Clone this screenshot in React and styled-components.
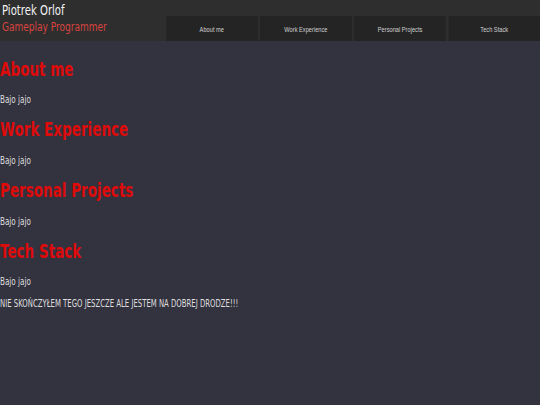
import React from "react";
import styled, { createGlobalStyle } from "styled-components";

const Global = createGlobalStyle`
  html, body {
    margin: 0;
    padding: 0;
    background: #33323f;
    overflow: hidden;
  }
  body {
    font-family: "DejaVu Sans", sans-serif;
  }
`;

const Page = styled.div`
  width: 750px;
  min-height: 405px;
  transform: scaleX(0.72);
  transform-origin: 0 0;
`;

const Header = styled.header`
  display: flex;
  justify-content: space-between;
  height: 41px;
  background: #2e2e2e;
`;

const Brand = styled.div`
  display: flex;
  flex-direction: column;
  gap: 1px;
  padding: 2px 0 0 2.8px;
`;

const Name = styled.div`
  font-size: 14px;
  color: #f2f2f2;
  line-height: normal;
`;

const Role = styled.div`
  font-size: 12.5px;
  color: #d9433f;
  line-height: normal;
`;

const Nav = styled.nav`
  align-self: flex-end;
  display: flex;
  gap: 3.5px;
  width: 519.5px;
  height: 25px;
`;

const NavButton = styled.a`
  flex: 1;
  display: flex;
  align-items: center;
  justify-content: center;
  background: #242424;
  color: #d2d2d2;
  font-family: "Liberation Sans", Arial, sans-serif;
  font-size: 7.9px;
  text-decoration: none;
  padding-top: 1px;
  box-sizing: border-box;
`;

const Main = styled.main`
  display: flex;
  flex-direction: column;
  padding-top: 17.5px;
`;

const Section = styled.section`
  display: flex;
  flex-direction: column;
  gap: 13.5px;
  margin-bottom: ${(p) => (p.$last ? "0" : "13.3px")};
`;

const Title = styled.h2`
  margin: 0;
  font-size: 18.8px;
  line-height: 22px;
  font-weight: bold;
  color: #de0b0b;
`;

const Text = styled.p`
  margin: 0;
  font-size: 10px;
  line-height: 12px;
  color: #dedede;
`;

const Note = styled(Text)`
  margin-top: 9.5px;
  font-size: 9.6px;
`;

const sections = ["About me", "Work Experience", "Personal Projects", "Tech Stack"];

export default function App() {
  return (
    <>
      <Global />
      <Page>
        <Header>
          <Brand>
            <Name>Piotrek Orlof</Name>
            <Role>Gameplay Programmer</Role>
          </Brand>
          <Nav>
            {sections.map((s) => (
              <NavButton key={s} href={"#" + s}>
                {s}
              </NavButton>
            ))}
          </Nav>
        </Header>
        <Main>
          {sections.map((s, i) => (
            <Section key={s} $last={i === sections.length - 1}>
              <Title>{s}</Title>
              <Text>Bajo jajo</Text>
            </Section>
          ))}
          <Note>NIE SKOŃCZYŁEM TEGO JESZCZE ALE JESTEM NA DOBREJ DRODZE!!!</Note>
        </Main>
      </Page>
    </>
  );
}
